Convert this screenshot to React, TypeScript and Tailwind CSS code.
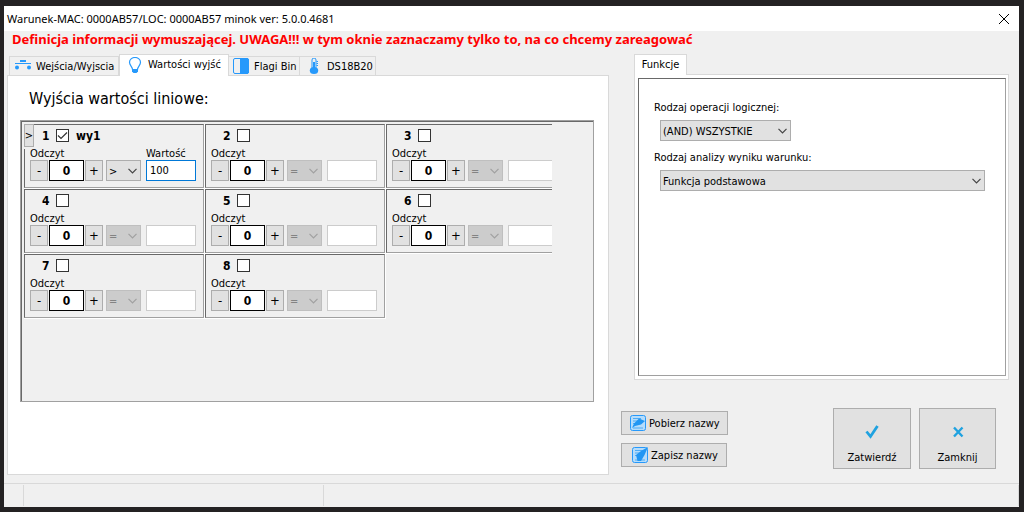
import { useState } from "react";
import type { ReactNode } from "react";

type Output = { id: number; name?: string; checked?: boolean; op: string; value: string };

const outputs: Output[] = [
  { id: 1, name: "wy1", checked: true, op: ">", value: "100" },
  { id: 2, op: "=", value: "" },
  { id: 3, op: "=", value: "" },
  { id: 4, op: "=", value: "" },
  { id: 5, op: "=", value: "" },
  { id: 6, op: "=", value: "" },
  { id: 7, op: "=", value: "" },
  { id: 8, op: "=", value: "" },
];

function SwitchIcon() {
  return (
    <svg width="16" height="16" viewBox="0 0 16 16" fill="#2699fb" aria-hidden="true">
      <path d="M5 2h6v2H5zM0 5h16v1H0z" />
      <circle cx="2" cy="9.500" r="2" />
      <circle cx="14" cy="9.500" r="2" />
    </svg>
  );
}

function BulbIcon() {
  return (
    <svg width="16" height="16" viewBox="0 0 16 16" fill="none" aria-hidden="true">
      <path d="M5.500 12.500c0-3-3-4-3-7.200a5.500 4.800 0 0 1 11 0c0 3.200-3 4.200-3 7.200z" stroke="#2699fb" strokeWidth="1.200" />
      <path d="M5 12h6v2.500L9.500 16h-3L5 14.500z" fill="#2699fb" />
    </svg>
  );
}

function FlagIcon() {
  return (
    <svg width="16" height="16" viewBox="0 0 16 16" fill="none" aria-hidden="true">
      <rect x="0.500" y="0.500" width="15" height="15" rx="1.500" stroke="#2699fb" />
      <path d="M7 0h7.500L16 1.500v13L14.500 16H7z" fill="#2699fb" />
    </svg>
  );
}

function ThermometerIcon() {
  return (
    <svg width="16" height="16" viewBox="0 0 16 16" fill="none" aria-hidden="true">
      <path d="M6 10V2a2 2 0 0 1 4 0v8" stroke="#2699fb" />
      <path d="M7 4h2v7H7z" fill="#2699fb" />
      <ellipse cx="8" cy="12.500" rx="4.200" ry="3.500" fill="#2699fb" />
      <path d="M10.500 3.500H12M10.500 5.500H12M10.500 7.500H12" stroke="#2699fb" />
    </svg>
  );
}

function NoteIcon({ children }: { children: ReactNode }) {
  return (
    <svg width="16" height="16" viewBox="0 0 16 16" fill="none" aria-hidden="true">
      <rect x="0.500" y="0.500" width="15" height="15" rx="2" fill="#b5dcfb" stroke="#2699fb" />
      <path d="M3 3.500h8M3 6h6M3 8.500h4M3 13h10" stroke="#4dabf5" />
      {children}
    </svg>
  );
}

function Chevron({ className }: { className: string }) {
  return (
    <svg width="9" height="6" viewBox="0 0 9 6" fill="none" stroke="currentColor" strokeWidth="1.200" className={className} aria-hidden="true">
      <path d="M0.500 0.800 4.500 4.800 8.500 0.800" />
    </svg>
  );
}

function Select({ id, label, options, disabled, className }: { id: string; label?: string; options: string[]; disabled?: boolean; className: string }) {
  return (
    <div className={`relative h-[21px] ${className}`}>
      <select
        id={id}
        aria-label={label}
        disabled={disabled}
        className="block size-full appearance-none rounded-none border border-[#adadad] bg-[#e1e1e1] pt-[2px] pr-3 pl-[2px] leading-[17px] text-black opacity-100 outline-none disabled:border-[#bfbfbf] disabled:bg-[#cccccc] disabled:text-[#838383]"
      >
        {options.map((o) => (
          <option key={o}>{o}</option>
        ))}
      </select>
      <Chevron className={`pointer-events-none absolute top-2 right-1 ${disabled ? "text-[#a0a0a0]" : "text-[#444444]"}`} />
    </div>
  );
}

function OutputCell({ output }: { output: Output }) {
  const [count, setCount] = useState(0);
  const [checked, setChecked] = useState(!!output.checked);
  const key = `out-${output.id}`;
  const step = "h-[21px] w-[18px] border border-[#adadad] bg-[#e1e1e1] text-[13px] leading-[18px]";
  return (
    <div className="relative h-[65px] border-r border-b border-white">
      <div className="h-full border border-t-[#696969] border-r-[#a0a0a0] border-b-[#a0a0a0] border-l-[#696969] pl-[5px]">
        <div className="mb-px flex h-[21px] items-center pl-3 text-[12px] font-bold">
          <label htmlFor={key} className="w-[7px]">{output.id}</label>
          <span className="relative ml-[7px] size-[13px]">
            <input
              id={key}
              type="checkbox"
              checked={checked}
              onChange={(e) => setChecked(e.target.checked)}
              className="block size-[13px] appearance-none border border-[#333333] bg-white"
            />
            {checked && (
              <svg width="13" height="13" viewBox="0 0 13 13" fill="none" stroke="#333333" strokeWidth="1.200" className="pointer-events-none absolute inset-0" aria-hidden="true">
                <path d="M2 6.500 5 9.500 11 3.500" />
              </svg>
            )}
          </span>
          {output.name && <label htmlFor={key} className="ml-[7px]">{output.name}</label>}
        </div>
        <div className="flex h-[13px] leading-[13px]">
          <label htmlFor={`${key}-read`} className="w-[116px]">Odczyt</label>
          {checked && <label htmlFor={`${key}-value`}>Wartość</label>}
        </div>
        <div className="flex">
          <button type="button" className={step} onClick={() => setCount(count - 1)}>-</button>
          <input
            id={`${key}-read`}
            readOnly
            value={count}
            className="mx-px h-[21px] w-[35px] border border-black bg-white text-center text-[12px] font-bold outline-none"
          />
          <button type="button" className={step} onClick={() => setCount(count + 1)}>+</button>
          <Select id={`${key}-op`} label="Operator" options={[output.op]} disabled={!checked} className="ml-[3px] w-[35px]" />
          <input
            id={`${key}-value`}
            aria-label="Wartość"
            defaultValue={output.value}
            disabled={!checked}
            className="ml-[5px] h-[21px] w-[50px] shrink-0 border border-[#0078d7] bg-white px-[3px] outline-none disabled:border-[#cccccc]"
          />
        </div>
      </div>
      {output.name && (
        <div className="absolute top-0 left-0 bg-[#f0f0f0] pb-[2px]">
          <button type="button" className="block h-[23px] w-[10px] border border-[#adadad] bg-[#e1e1e1] text-[11px] leading-[20px]">
            <span className="-mx-1">&gt;</span>
          </button>
        </div>
      )}
    </div>
  );
}

function Tab({ icon, label, active, className }: { icon: ReactNode; label: string; active?: boolean; className: string }) {
  return (
    <button
      type="button"
      role="tab"
      aria-selected={!!active}
      className={`flex items-center border border-b-0 border-[#d9d9d9] whitespace-nowrap ${active ? "relative -mb-px h-[22px] bg-white pb-[2px]" : "h-[19px] bg-[#f0f0f0]"} ${className}`}
    >
      {icon}
      <span className={active ? "" : "pt-[2px]"}>{label}</span>
    </button>
  );
}

export default function App() {
  const action = "flex h-[61px] flex-col items-center justify-end gap-[11px] border border-[#adadad] bg-[#e1e1e1] pb-[3px]";
  const small = "flex h-6 items-center gap-[3px] border border-[#adadad] bg-[#e1e1e1]";
  return (
    <div className="flex min-h-screen bg-[#242223] pt-[6px] pr-[5px] pb-[5px] pl-1 font-['DejaVu_Sans_Condensed','DejaVu_Sans',sans-serif] text-[11px] leading-[14px] text-black">
      <div className="flex flex-1 flex-col bg-[#f0f0f0]">
        <header className="flex h-[25px] items-center justify-between bg-white pr-[10px] pl-[3px]">
          <h1 className="font-['Noto_Sans',sans-serif] text-[11px]">Warunek-MAC: 0000AB57/LOC: 0000AB57 minok ver: 5.0.0.4681</h1>
          <button type="button" aria-label="Zamknij okno">
            <svg width="10" height="10" viewBox="0 0 10 10" stroke="#000000" fill="none" aria-hidden="true">
              <path d="M0 0 10 10M10 0 0 10" />
            </svg>
          </button>
        </header>
        <p className="h-[23px] pl-2 font-['Noto_Sans',sans-serif] text-[13px] leading-[17px] font-bold text-[#ff0000]">
          Definicja informacji wymuszającej. UWAGA!!! w tym oknie zaznaczamy tylko to, na co chcemy zareagować
        </p>
        <main className="grid flex-1 grid-cols-[602fr_388fr] gap-3 pr-[10px] pb-2 pl-[3px]">
          <section className="flex flex-col">
            <div role="tablist" className="flex items-end pl-[2px]">
              <Tab icon={<SwitchIcon />} label="Wejścia/Wyjscia" className="w-[110px] gap-[5px] pl-[5px]" />
              <Tab active icon={<BulbIcon />} label="Wartości wyjść" className="w-[110px] gap-[5px] pl-[7px]" />
              <Tab icon={<FlagIcon />} label="Flagi Bin" className="w-[71px] gap-[5px] border-l-0 pl-1" />
              <Tab icon={<ThermometerIcon />} label="DS18B20" className="w-[76px] gap-[5px] border-l-0 pl-[6px]" />
            </div>
            <div role="tabpanel" className="flex flex-1 flex-col border border-[#d9d9d9] bg-white pr-[14px] pb-[72px] pl-3">
              <h2 className="h-[44px] pt-[13px] pl-[9px] text-[16px] leading-[20px]">Wyjścia wartości liniowe:</h2>
              <div className="flex-1 border border-[#a0a0a0] bg-[#f0f0f0]">
                <div className="h-full border-t border-l border-[#696969] pt-[2px] pl-[2px]">
                  <div className="grid w-[528px] grid-cols-[181px_181px_181px] overflow-hidden">
                    {outputs.map((o) => (
                      <OutputCell key={o.id} output={o} />
                    ))}
                  </div>
                </div>
              </div>
            </div>
          </section>
          <aside className="flex flex-col">
            <div className="ml-[13px] flex flex-col">
              <div role="tablist" className="flex">
                <button type="button" role="tab" aria-selected="true" className="relative -mb-px h-[21px] w-[53px] border border-b-0 border-[#d9d9d9] bg-white">
                  Funkcje
                </button>
              </div>
              <div role="tabpanel" className="h-[306px] border border-[#d9d9d9] bg-white p-[3px] pr-[2px]">
                <div className="flex h-full flex-col items-start border border-t-[#696969] border-r-[#a0a0a0] border-b-[#a0a0a0] border-l-[#696969] pt-[22px] pr-5 pl-[15px]">
                  <label htmlFor="logic">Rodzaj operacji logicznej:</label>
                  <Select id="logic" options={["(AND) WSZYSTKIE"]} className="mt-[5px] ml-[6px] w-[131px]" />
                  <label htmlFor="analysis" className="mt-[10px]">Rodzaj analizy wyniku warunku:</label>
                  <div className="w-full pl-[6px]">
                    <Select id="analysis" options={["Funkcja podstawowa"]} className="mt-[5px] w-full" />
                  </div>
                </div>
              </div>
            </div>
            <div className="mt-[28px] flex items-start justify-between pr-[13px]">
              <div className="flex flex-col items-start gap-2 pt-[3px]">
                <button type="button" className={`${small} w-[107px] pl-2`}>
                  <NoteIcon><path d="M2 13 4 8.500 9 3.500 15 6 11 9.500 5 11z" fill="#2196f3" /></NoteIcon>
                  <span className="pt-[2px]">Pobierz nazwy</span>
                </button>
                <button type="button" className={`${small} w-[106px] pl-[10px]`}>
                  <NoteIcon><path d="M16 0 9 4 4 8 5.500 14 9 14 12.500 8z" fill="#2196f3" /></NoteIcon>
                  <span className="pt-[2px]">Zapisz nazwy</span>
                </button>
              </div>
              <div className="flex gap-2">
                <button type="button" className={`${action} w-[78px]`}>
                  <svg width="16" height="16" viewBox="0 0 16 16" fill="none" stroke="#1fa2e0" strokeWidth="2.800" aria-hidden="true">
                    <path d="M2.500 7.500 6.500 12.500 13.500 2" />
                  </svg>
                  Zatwierdź
                </button>
                <button type="button" className={`${action} w-[77px]`}>
                  <svg width="16" height="16" viewBox="0 0 16 16" fill="none" stroke="#1fa2e0" strokeWidth="2.400" aria-hidden="true">
                    <path d="M4 3.500 12.500 12.500M12.500 3.500 4 12.500" />
                  </svg>
                  Zamknij
                </button>
              </div>
            </div>
          </aside>
        </main>
        <footer className="flex h-6 border-t border-[#d9d9d9] py-px">
          <div className="w-5 border-r border-[#d9d9d9]" />
          <div className="w-[300px] border-r border-[#d9d9d9]" />
          <div className="flex-1 border-r border-[#d9d9d9]" />
        </footer>
      </div>
    </div>
  );
}
